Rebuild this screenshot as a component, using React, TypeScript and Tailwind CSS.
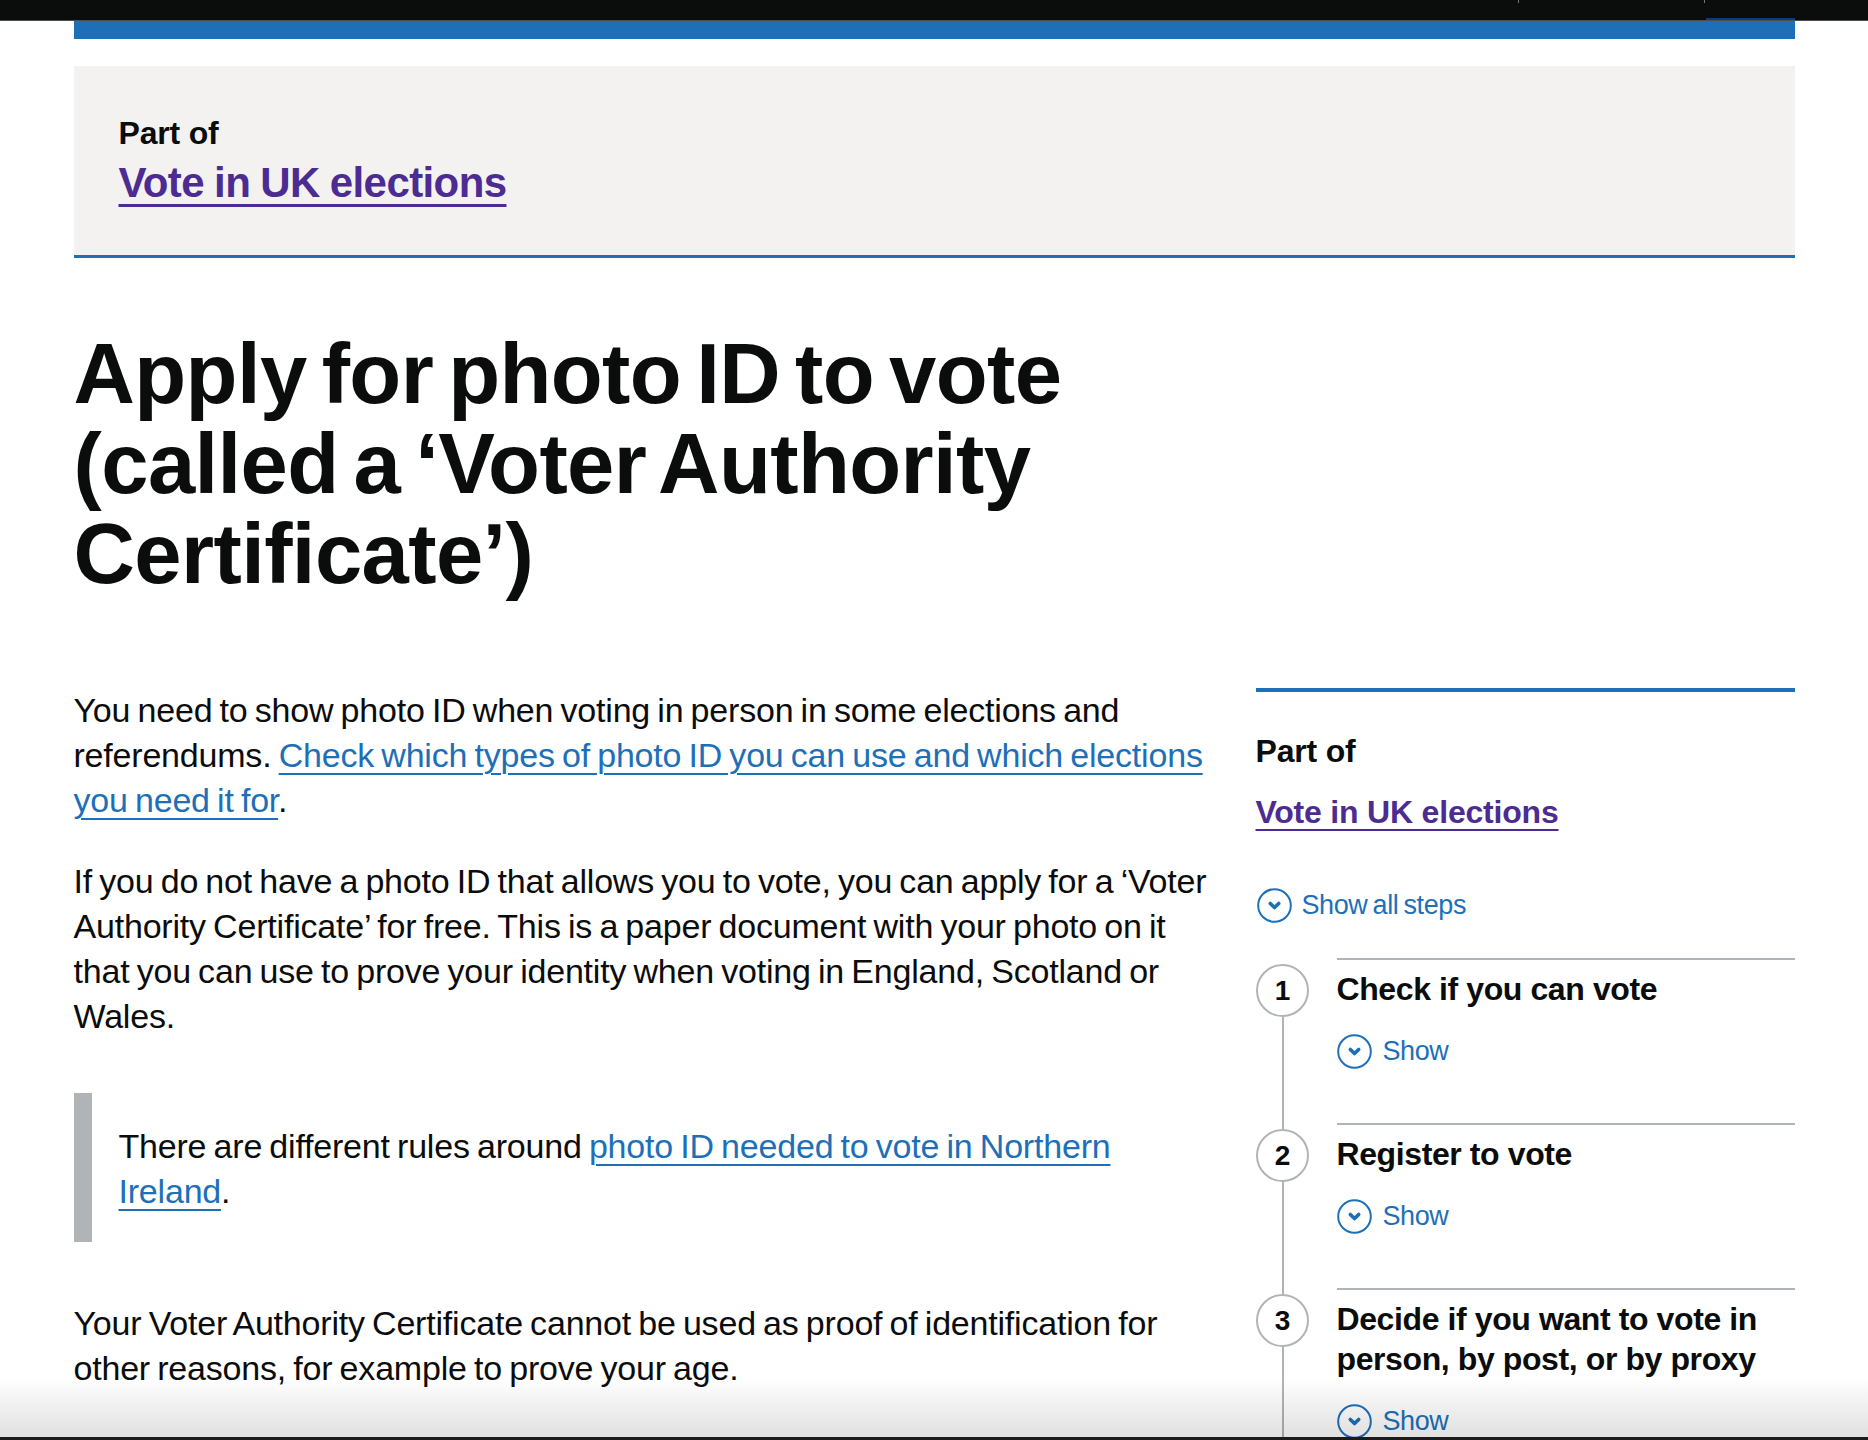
import React from "react";

function ChevronCircle() {
  return (
    <svg width="35" height="35" viewBox="0 0 35 35" className="shrink-0">
      <circle cx="17.5" cy="17.5" r="16.3" fill="none" stroke="#1d70b8" strokeWidth="2" />
      <path
        d="M13.3 15.4 L17.5 19.6 L21.7 15.4"
        fill="none"
        stroke="#1d70b8"
        strokeWidth="3.6"
        strokeLinecap="round"
        strokeLinejoin="round"
      />
    </svg>
  );
}

const steps = [
  { n: 1, title: ["Check if you can vote"] },
  { n: 2, title: ["Register to vote"] },
  { n: 3, title: ["Decide if you want to vote in", "person, by post, or by proxy"] },
];

export default function App() {
  return (
    <div className="relative h-[1440px] overflow-hidden bg-white font-['Liberation_Sans',Arial,sans-serif] text-[#0b0c0c]">
      {/* top header strip */}
      <div className="h-[21px] border-b border-[#4a4f52] bg-[#0b0c0c]">
        <div className="mx-auto flex h-full w-[1721px]">
          <div className="ml-[1444px] h-[3px] w-px bg-[#6f777b]" />
          <div className="ml-[185px] h-[3px] w-px bg-[#6f777b]" />
          <div className="ml-[1px] mt-[18px] h-[2px] flex-1 bg-[#0b3d7a]" />
        </div>
      </div>

      <div className="mx-auto w-[1721px]">
        <div className="h-[18px] bg-[#1d70b8]" />

        {/* Part of box */}
        <div className="mt-[27px] border-b-[3px] border-[#1d70b8] bg-[#f3f2f1] px-[45px] pt-[45px] pb-[45px]">
          <p className="text-[32px] leading-[45px] font-bold tracking-[-0.2px]">Part of</p>
          <a
            href="#"
            className="text-[42px] leading-[54px] font-bold tracking-[-0.6px] text-[#4c2c92] underline decoration-[2.5px] underline-offset-[7px] [word-spacing:-1px]"
          >
            Vote in UK elections
          </a>
        </div>

        {/* Title */}
        <h1 className="mt-[71px] mb-[89px] w-[1128px] text-[85px] leading-[90px] font-bold tracking-[-0.6px] [word-spacing:-8px]">
          Apply for photo ID to vote (called a ‘Voter Authority Certificate’)
        </h1>

        <div className="flex gap-[54px]">
          {/* main column */}
          <div className="w-[1128px] shrink-0 text-[34px] leading-[45px] tracking-[-0.2px] whitespace-nowrap [word-spacing:-2px]">
            <p className="mb-[36px]">
              You need to show photo ID when voting in person in some elections and
              <br />
              referendums.{" "}
              <a href="#" className="text-[#1d70b8] underline decoration-2 underline-offset-[6px]">
                Check which types of photo ID you can use and which elections
                <br />
                you need it for
              </a>
              .
            </p>
            <p>
              If you do not have a photo ID that allows you to vote, you can apply for a ‘Voter
              <br />
              Authority Certificate’ for free. This is a paper document with your photo on it
              <br />
              that you can use to prove your identity when voting in England, Scotland or
              <br />
              Wales.
            </p>
            <div className="mt-[54px] border-l-[18px] border-[#b1b4b6] pt-[31px] pb-[28px] pl-[27px]">
              <p>
                There are different rules around{" "}
                <a href="#" className="text-[#1d70b8] underline decoration-2 underline-offset-[6px]">
                  photo ID needed to vote in Northern
                  <br />
                  Ireland
                </a>
                .
              </p>
            </div>
            <p className="mt-[59px]">
              Your Voter Authority Certificate cannot be used as proof of identification for
              <br />
              other reasons, for example to prove your age.
            </p>
          </div>

          {/* sidebar */}
          <aside className="w-[539px] shrink-0 border-t-4 border-[#1d70b8] pt-[37px]">
            <h2 className="mb-[16px] text-[32px] leading-[45px] font-bold tracking-[-0.2px]">Part of</h2>
            <a href="#" className="block text-[32px] leading-[45px] font-bold tracking-[-0.2px] text-[#4c2c92]">
              <span className="underline decoration-2 underline-offset-[6px]">Vote in UK elections</span>
            </a>

            <div className="mt-[53px] flex items-center gap-[10px] pl-[1px] text-[27px] leading-[35px] tracking-[-0.4px] text-[#1d70b8] [word-spacing:-2px]">
              <ChevronCircle />
              <span>Show all steps</span>
            </div>

            <ol className="mt-[35px]">
              {steps.map((s, i) => (
                <li key={s.n} className="flex">
                  <div className="flex w-[54px] shrink-0 flex-col items-center">
                    <div className={i === 0 ? "h-[6px] w-[2px]" : "h-[6px] w-[2px] bg-[#b1b4b6]"} />
                    <div className="flex h-[53px] w-[53px] items-center justify-center rounded-full border-2 border-[#b1b4b6] bg-white text-[28px] leading-none font-bold">
                      {s.n}
                    </div>
                    <div className="w-[2px] flex-1 bg-[#b1b4b6]" />
                  </div>
                  <div className="ml-[27px] flex-1 border-t-2 border-[#b1b4b6] pb-[54px]">
                    <h3 className="mt-[9px] text-[32px] leading-[40px] font-bold tracking-[-0.4px]">
                      {s.title.map((t, j) => (
                        <span key={j} className="block">
                          {t}
                        </span>
                      ))}
                    </h3>
                    <div className="mt-[25px] flex items-center gap-[11px] text-[27px] leading-[35px] tracking-[-0.4px] text-[#1d70b8]">
                      <ChevronCircle />
                      <span>Show</span>
                    </div>
                  </div>
                </li>
              ))}
            </ol>
          </aside>
        </div>
      </div>

      {/* bottom shade + edge */}
      <div className="pointer-events-none absolute inset-x-0 bottom-[3px] h-[60px] bg-linear-to-b from-black/0 to-black/[0.12]" />
      <div className="pointer-events-none absolute inset-x-0 bottom-0 h-[3px] bg-[#1c1b1b]" />
    </div>
  );
}
